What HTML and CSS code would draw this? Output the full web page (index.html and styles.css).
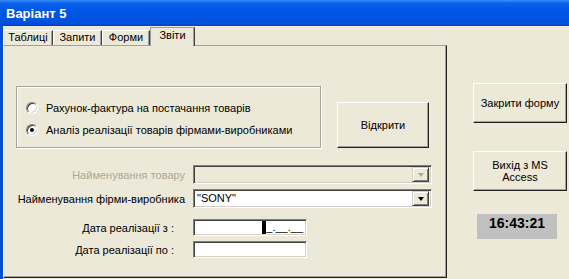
FILE: index.html
```html
<!DOCTYPE html>
<html lang="uk">
  <head>
    <meta charset="UTF-8" />
    <title>Варіант 5</title>
    <link rel="stylesheet" href="styles.css">
  </head>
  <body>
    <div class="window">
      <div class="titlebar">Варіант 5</div>
      <div class="client">
        <div class="main">
          <div class="tabs">
            <div class="tab t1">Таблиці</div>
            <div class="tab t2">Запити</div>
            <div class="tab t3">Форми</div>
            <div class="tab active">Звіти</div>
          </div>
          <div class="panel">
            <div class="top-row">
              <div class="group">
                <div class="option"><span class="radio"></span>Рахунок-фактура на постачання товарів</div>
                <div class="option"><span class="radio checked"></span>Аналіз реалізації товарів фірмами-виробниками</div>
              </div>
              <div class="btn open">Відкрити</div>
            </div>
            <div class="fields">
              <div class="label disabled">Найменування товару</div>
              <div class="combo off"><span class="value"></span><span class="arrow"><i></i></span></div>

              <div class="label">Найменування фірми-виробника</div>
              <div class="combo"><span class="value">"SONY"</span><span class="arrow"><i></i></span></div>

              <div class="label short gap">Дата реалізації з :</div>
              <div class="field gap"><span class="caret"></span>_.__.__</div>

              <div class="label short">Дата реалізації по :</div>
              <div class="field"></div>
            </div>
          </div>
        </div>
        <div class="side">
          <div class="btn side-btn first">Закрити форму</div>
          <div class="btn side-btn">Вихід з MS<br>Access</div>
          <div class="clock">16:43:21</div>
        </div>
      </div>
    </div>
  </body>
</html>
```

FILE: styles.css
```css
body {
  margin: 0;
  width: 569px;
  height: 279px;
  overflow: hidden;
  background: #ece9d8;
  font-family: "Liberation Sans", Arial, sans-serif;
  font-size: 11px;
  color: #000;
}
.window {
  display: flex;
  flex-direction: column;
  height: 279px;
}
.titlebar {
  height: 26px;
  box-sizing: border-box;
  padding: 2px 0 0 6px;
  line-height: 24px;
  color: #fff;
  font-size: 13px;
  font-weight: bold;
  background: linear-gradient(#3d8ffa 0, #0a62ec 3px, #0057e6 40%, #0052df 85%, #0044c8 100%);
}
.client {
  flex: 1;
  display: flex;
  border-left: 3px solid #0650d8;
}
.main {
  width: 444px;
  display: flex;
  flex-direction: column;
}
.tabs {
  display: flex;
  align-items: flex-end;
  height: 18px;
  margin-top: 1px;
}
.tab {
  box-sizing: border-box;
  height: 15px;
  line-height: 13px;
  text-align: center;
  border-top: 1px solid #fff;
  border-left: 1px solid #fff;
  border-right: 1px solid #404040;
  box-shadow: inset -1px 0 #a0a0a0;
}
.t1 { width: 50px; }
.t2 { width: 49px; }
.t3 { width: 48px; }
.tab.active {
  width: 45px;
  height: 19px;
  margin-bottom: -1px;
  line-height: 15px;
  border-top-color: #a0a0a0;
  border-left-color: #a0a0a0;
  background: #ece9d8;
  position: relative;
  z-index: 1;
}
.panel {
  box-sizing: border-box;
  height: 233px;
  border-top: 1px solid #a0a0a0;
  border-left: 1px solid #fff;
  border-right: 1px solid #202020;
  border-bottom: 1px solid #202020;
  box-shadow: inset -1px -1px #a0a0a0;
  padding: 40px 0 0 12px;
}
.top-row {
  display: flex;
  align-items: flex-end;
}
.group {
  box-sizing: border-box;
  width: 305px;
  height: 62px;
  border: 1px solid #a5a49f;
  box-shadow: inset 1px 1px #fff, 1px 1px #fff;
  padding: 15px 0 0 9px;
}
.option {
  display: flex;
  align-items: center;
  height: 22px;
  margin-top: -5px;
}
.option + .option {
  margin-top: 0;
}
.radio {
  box-sizing: border-box;
  width: 12px;
  height: 12px;
  margin-right: 8px;
  border-radius: 50%;
  border: 1px solid;
  border-color: #808080 #fff #fff #808080;
  box-shadow: inset 1px 1px #404040, inset -1px -1px #d4d0c8;
  background: #fff;
  display: flex;
  align-items: center;
  justify-content: center;
}
.radio.checked::after {
  content: "";
  width: 4px;
  height: 4px;
  border-radius: 50%;
  background: #000;
}
.btn {
  box-sizing: border-box;
  display: flex;
  align-items: center;
  justify-content: center;
  text-align: center;
  border: 1px solid;
  border-color: #fff #202020 #202020 #fff;
  box-shadow: inset -1px -1px #a0a0a0;
  background: #ece9d8;
}
.open {
  width: 92px;
  height: 46px;
  margin-left: 16px;
}
.fields {
  display: grid;
  grid-template-columns: 169px 239px;
  column-gap: 8px;
  row-gap: 5px;
  margin-top: 17px;
}
.label {
  display: flex;
  align-items: center;
  justify-content: flex-end;
  height: 19px;
}
.label.disabled {
  color: #aca899;
}
.label.short {
  height: 17px;
  padding-right: 11px;
}
.gap {
  margin-top: 6px;
}
.combo,
.field {
  box-sizing: border-box;
  border: 1px solid;
  border-color: #808080 #fff #fff #808080;
  box-shadow: inset 1px 1px #404040, inset -1px -1px #d4d0c8;
  background: #fff;
}
.combo {
  height: 19px;
  display: flex;
  padding: 1px;
}
.combo.off {
  background: #ece9d8;
}
.value {
  flex: 1;
  padding-left: 2px;
  line-height: 15px;
}
.arrow {
  box-sizing: border-box;
  width: 17px;
  margin-right: 1px;
  border: 1px solid;
  border-color: #d4d0c8 #404040 #404040 #d4d0c8;
  box-shadow: inset 1px 1px #fff, inset -1px -1px #808080;
  background: #ece9d8;
  display: flex;
  align-items: center;
  justify-content: center;
}
.arrow i {
  width: 0;
  height: 0;
  border-left: 3px solid transparent;
  border-right: 3px solid transparent;
  border-top: 4px solid #000;
}
.off .arrow i {
  border-top-color: #aca899;
}
.field {
  width: 114px;
  height: 17px;
  display: flex;
  align-items: center;
  justify-content: flex-end;
  padding-right: 3px;
  line-height: 13px;
}
.caret {
  width: 4px;
  height: 13px;
  background: #000;
}
.side {
  display: flex;
  flex-direction: column;
  align-items: flex-start;
  width: 122px;
}
.side-btn {
  width: 94px;
  height: 40px;
  margin: 28px 0 0 26px;
  line-height: 12px;
}
.side-btn.first {
  margin-top: 57px;
}
.clock {
  width: 80px;
  height: 25px;
  margin: 23px 0 0 30px;
  background: #c0c0c0;
  text-align: center;
  font-size: 14px;
  font-weight: bold;
  line-height: 18px;
}
```
